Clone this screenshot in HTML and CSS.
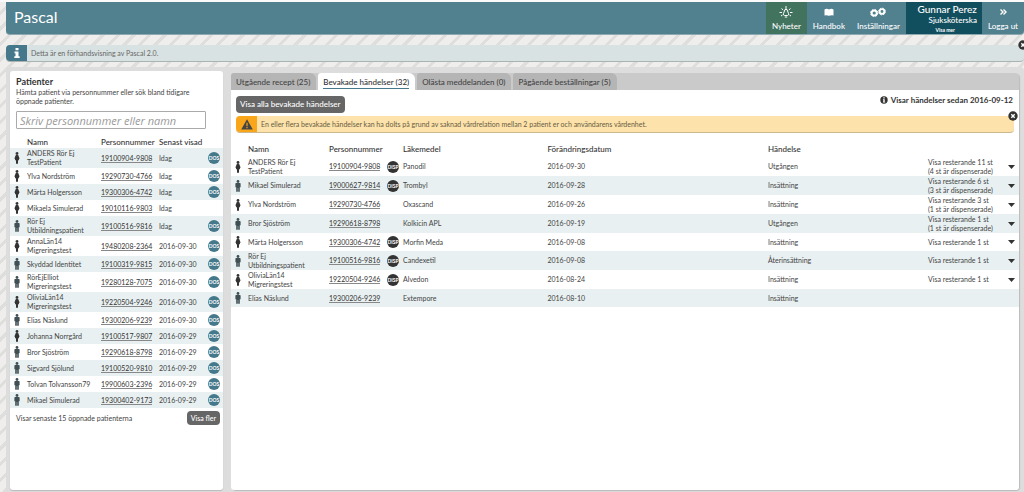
FILE: index.html
```html
<!DOCTYPE html>
<html lang="sv">
<head>
<meta charset="utf-8">
<meta name="viewport" content="width=device-width, initial-scale=1">
<title>Pascal</title>
<link rel="stylesheet" href="styles.css">
</head>
<body>
<svg class="symbols" aria-hidden="true">
  <symbol id="woman" viewBox="0 0 6 12"><circle cx="3" cy="1.5" r="1.4"/><path d="M1.800 3h2.400l1.400 3.500-.7.500L5 8.200H4v3.500H2V8.200H1L1.100 7l-.7-.5z"/></symbol>
  <symbol id="man" viewBox="0 0 6 12"><circle cx="3" cy="1.500" r="1.400"/><path d="M1 3h4l.6.6v3.600H4.800v4.500H3.200V8h-.4v3.700H1.200V7.200H.4V3.600z"/></symbol>
  <symbol id="close" viewBox="0 0 10 10"><circle cx="5" cy="5" r="4.700" fill="#333"/><path d="M3.300 3.300l3.400 3.400M6.700 3.300L3.300 6.700" stroke="#fff" stroke-width="1.400"/></symbol>
</svg>
<div class="page">
  <header class="topbar">
    <h1 class="brand">Pascal</h1>
    <nav class="menu">
      <a class="menu-item news" href="#"><svg class="menu-icon" viewBox="0 0 16 14" fill="none" stroke="#fff"><path d="M7 4.500L5.500 8.500Q5 10.200 6.500 10.500h3q1.500-.3 1-2L9 4.500z"/><path d="M6.800 12h2.400M8 1v3M3.500 3.500l1.700 1.500M12.500 3.500l-1.700 1.500M1.500 7.500h2.500M12 7.500h2.500M3 11l1.500-1M13 11l-1.500-1"/></svg>Nyheter</a>
      <a class="menu-item" href="#"><svg class="menu-icon" viewBox="0 0 16 14" fill="#fff"><path d="M3.500 4.500q2.300-1.300 4.500 0 2.300-1.300 4.500 0v6q-2.200-.4-4.500.3-2.200-.7-4.500-.3z"/></svg>Handbok</a>
      <a class="menu-item" href="#"><svg class="menu-icon" viewBox="0 0 16 14" fill="none" stroke="#fff"><circle cx="4.200" cy="8" r="2.600" stroke-width="2"/><circle cx="4.200" cy="8" r="3.600" stroke-dasharray="1.500 1.330"/><circle cx="12" cy="6.500" r="2.400" stroke-width="1.900"/><circle cx="12" cy="6.500" r="3.400" stroke-dasharray="1.400 1.270"/></svg>Inställningar</a>
      <a class="account" href="#"><span class="account-name">Gunnar Perez</span><span class="account-role">Sjuksköterska</span><span class="account-more">Visa mer</span></a>
      <a class="menu-item logout" href="#"><svg class="menu-icon" viewBox="0 0 16 14" fill="none" stroke="#fff" stroke-width="1.400"><path d="M5.500 4.500L8 7 5.500 9.500M8.500 4.500L11 7 8.500 9.500"/></svg>Logga ut</a>
    </nav>
  </header>

  <div class="notice info">
    <span class="notice-icon"><svg viewBox="0 0 8 10" width="8" height="10" fill="#fff"><path d="M2.500 0h3v2.200h-3zM1.500 3.500h4v4.700h1.200V10H1.300V8.200h1.200v-3h-1z"/></svg></span>
    <p class="notice-text">Detta är en förhandsvisning av Pascal 2.0.</p>
    <button class="dismiss" type="button" aria-label="Stäng"><svg width="10" height="10"><use href="#close"/></svg></button>
  </div>

  <main class="workspace">
    <section class="patients">
      <div class="patients-head">
        <h2 class="title">Patienter</h2>
        <label class="hint" for="search">Hämta patient via personnummer eller sök bland tidigare öppnade patienter.</label>
        <input class="search" id="search" type="text" placeholder="Skriv personnummer eller namn">
      </div>
      <table class="list patient-list">
        <colgroup><col class="p-icon"><col class="p-name"><col class="p-id"><col class="p-seen"><col class="p-tag"></colgroup>
        <thead><tr><th></th><th>Namn</th><th>Personnummer</th><th>Senast visad</th><th></th></tr></thead>
        <tbody id="patients"></tbody>
      </table>
      <div class="patients-foot"><span>Visar senaste 15 öppnade patienterna</span><button class="button small" type="button">Visa fler</button></div>
    </section>

    <section class="events">
      <nav class="tabs">
        <a class="tab" href="#"><span>Utgående recept (25)</span></a>
        <a class="tab active" href="#" aria-current="page"><span>Bevakade händelser (32)</span></a>
        <a class="tab" href="#"><span>Olästa meddelanden (0)</span></a>
        <a class="tab" href="#"><span>Pågående beställningar (5)</span></a>
      </nav>
      <div class="events-body">
        <div class="toolbar">
          <button class="button" type="button">Visa alla bevakade händelser</button>
          <span class="since"><svg width="8" height="8" viewBox="0 0 8 8"><circle cx="4" cy="4" r="3.700" fill="#333"/><path d="M3.300 1.300h1.400v1.200H3.300zM2.900 3.200h1.800v2.600h.5v.8H2.900v-.8h.4V4h-.4z" fill="#fff"/></svg>Visar händelser sedan 2016-09-12</span>
        </div>
        <div class="notice warning">
          <span class="notice-icon"><svg viewBox="0 0 12 11" width="12" height="11"><path d="M6 .3L11.800 10.500H.2z" fill="#444"/><path d="M5.400 3.800h1.200v3.500H5.400zM5.400 8h1.200v1.300H5.400z" fill="#f9a61a"/></svg></span>
          <p class="notice-text">En eller flera bevakade händelser kan ha dolts på grund av saknad vårdrelation mellan 2 patient er och användarens vårdenhet.</p>
          <button class="dismiss" type="button" aria-label="Stäng"><svg width="10" height="10"><use href="#close"/></svg></button>
        </div>
        <table class="list event-list">
          <colgroup><col class="e-icon"><col class="e-name"><col class="e-id"><col class="e-tag"><col class="e-drug"><col class="e-date"><col class="e-type"><col class="e-rest"><col class="e-open"></colgroup>
          <thead><tr><th></th><th>Namn</th><th>Personnummer</th><th></th><th>Läkemedel</th><th>Förändringsdatum</th><th>Händelse</th><th></th><th></th></tr></thead>
          <tbody id="events"></tbody>
        </table>
      </div>
    </section>
  </main>
</div>
<script src="app.js"></script>
</body>
</html>
```

FILE: styles.css
```css
* { box-sizing: border-box; }
body {
  margin: 0;
  font: 7px/9px Lato, "Liberation Sans", sans-serif;
  color: #444;
  background: repeating-linear-gradient(135deg, #efeeec 0 8px, #dededd 8px 11px);
}
h1, h2, p { margin: 0; }
a { color: inherit; text-decoration: none; }
button { font: inherit; border: 0; padding: 0; cursor: pointer; }
.symbols { display: none; }
.page { display: flex; flex-direction: column; min-height: 100vh; padding-left: 6px; border-top: 2px solid #fafafa; overflow-x: hidden; }

.topbar { display: flex; justify-content: space-between; height: 33px; background: #51808f; color: #fff; border-radius: 0 0 4px 4px; border-bottom: 1px solid #8fa9b0; overflow: hidden; }
.brand { font-size: 16px; line-height: 29px; font-weight: 400; padding-left: 8px; }
.menu { display: flex; }
.menu-item { display: flex; flex-direction: column; align-items: center; padding: 3px 6px 0; font-size: 8px; line-height: 10px; font-weight: 500; }
.menu-item.news { background: #41735f; }
.menu-icon { width: 16px; height: 14px; margin-bottom: 2px; }
.account { display: flex; flex-direction: column; align-items: flex-end; width: 76px; padding: 2px 5px 0 0; background: #124f5e; font-weight: 500; }
.account-name { font-size: 10px; line-height: 11px; }
.account-role { font-size: 8px; line-height: 11px; }
.account-more { font-size: 5px; line-height: 8px; padding-right: 22px; font-weight: 700; }

.notice { position: relative; display: flex; height: 17px; }
.notice-icon { display: flex; flex: none; align-items: center; justify-content: center; width: 21px; border-radius: 4px 0 0 4px; }
.notice-text { line-height: 16px; padding-left: 4px; }
.info { margin-top: 10px; background: #d9e2e2; border-bottom: 1px solid #aab3b3; border-radius: 4px; color: #666; }
.info .notice-icon { background: #44788a; }
.dismiss { position: absolute; top: -5px; right: -4px; width: 10px; height: 10px; background: none; }
.dismiss svg { display: block; }

.workspace { display: flex; flex: 1; gap: 8px; margin-top: 5px; padding: 4px 5px 2px 4px; background: #ddd; border-radius: 4px 4px 0 0; }
.patients { flex: 0 0 213px; background: #fff; border-radius: 3px; box-shadow: 0 1px 1px #bbb; }
.patients-head { padding: 5px 17px 0 6px; }
.title { font-size: 9px; line-height: 11px; color: #333; }
.hint { display: block; margin-top: 1px; }
.search { display: block; width: 100%; height: 18px; margin-top: 5px; padding: 0 3px; border: 1px solid #aaa; border-radius: 1px; background: #fff; font: italic 11px/16px "Open Sans", sans-serif; color: #444; }
.search::placeholder { color: #999; opacity: 1; }

.list { width: 100%; table-layout: fixed; border-collapse: collapse; }
.list th, .list td { padding: 0; text-align: left; vertical-align: middle; }
.list th { color: #333; font-size: 8px; font-weight: 500; white-space: nowrap; }
.list a { color: #333; border-bottom: 1px solid #888; }
.person { display: block; width: 6px; height: 12px; fill: #333; }
.person.man { fill: #3f4f54; }
.tag { display: flex; align-items: center; justify-content: center; width: 12px; height: 12px; border-radius: 50%; background: #44788a; color: #fff; font-size: 5px; line-height: 12px; font-weight: 700; }
.tag.disp { background: #333; }

.patient-list { margin-top: 8px; }
.patient-list th { height: 11px; }
.patient-list td { height: 16px; }
.patient-list .double td { height: 20px; }
.patient-list tbody tr:nth-child(odd), .event-list tbody tr:nth-child(even) { background: #e8f0f1; }
.list td:first-child { padding-left: 4px; }
.p-icon { width: 17px; }
.p-name { width: 74px; }
.p-id { width: 58px; }
.p-seen { width: 49px; }
.patients-foot { display: flex; align-items: center; justify-content: space-between; padding: 3px 3px 0 6px; }

.button { height: 17px; padding: 0 4px; border-radius: 4px; background: #666; color: #fff; font-size: 8px; font-weight: 500; line-height: 17px; }
.button.small { height: 14px; font-size: 7px; line-height: 14px; }

.events { display: flex; flex: 1; flex-direction: column; min-width: 0; margin-top: 2px; border-radius: 4px; background: #cacaca; box-shadow: 1px 1px 1px #bbb; }
.tabs { display: flex; height: 17px; }
.tab { padding: 3px 6px 0 5px; margin-right: 2px; border-radius: 3px 6px 0 0; background: #b5b5b5; font-size: 8px; font-weight: 500; line-height: 12px; }
.tab span { display: block; }
.tab.active { background: #fff; color: #333; }
.tab.active span { border-bottom: 1px solid #44788a; }
.events-body { flex: 1; background: #fff; border-radius: 0 0 3px 3px; }
.toolbar { display: flex; justify-content: space-between; padding: 6px 6px 0 5px; }
.since { display: flex; gap: 3px; font-size: 8px; line-height: 9px; font-weight: 700; color: #333; }
.warning { margin: 3px 5px 0; background: #fde2ab; border-bottom: 1px solid #cbb88f; border-radius: 4px; color: #665c42; }
.warning .notice-icon { background: #f9a61a; }

.event-list { margin-top: 12px; }
.event-list th { height: 12px; vertical-align: top; }
.event-list td { height: 18px; }
.event-list .double td { height: 19px; }
.e-icon { width: 17px; }
.e-name { width: 81px; }
.e-id { width: 58px; }
.e-tag { width: 16px; }
.e-drug { width: auto; }
.e-date { width: 28%; }
.e-type { width: 160px; }
.e-rest { width: 80px; }
.e-open { width: 11px; }
.expand { display: block; width: 7px; height: 12px; background: none; }
.expand svg { display: block; }
```

FILE: app.js
```js
const patients = [
  ['woman', 'ANDERS Rör Ej<br>TestPatient', '19100904-9808', 'Idag', true],
  ['woman', 'Ylva Nordström', '19290730-4766', 'Idag', true],
  ['woman', 'Märta Holgersson', '19300306-4742', 'Idag', true],
  ['woman', 'Mikaela Simulerad', '19010116-9803', 'Idag', false],
  ['man', 'Rör Ej<br>Utbildningspatient', '19100516-9816', 'Idag', true],
  ['woman', 'AnnaLän14<br>Migreringstest', '19480208-2364', '2016-09-30', true],
  ['man', 'Skyddad Identitet', '19100319-9815', '2016-09-30', true],
  ['man', 'RörEjElliot<br>Migreringstest', '19280128-7075', '2016-09-30', true],
  ['woman', 'OliviaLän14<br>Migreringstest', '19220504-9246', '2016-09-30', true],
  ['man', 'Elias Näslund', '19300206-9239', '2016-09-30', true],
  ['woman', 'Johanna Norrgård', '19100517-9807', '2016-09-29', true],
  ['man', 'Bror Sjöström', '19290618-8798', '2016-09-29', true],
  ['man', 'Sigvard Sjölund', '19100520-9810', '2016-09-29', true],
  ['man', 'Tolvan Tolvansson79', '19900603-2396', '2016-09-29', true],
  ['man', 'Mikael Simulerad', '19300402-9173', '2016-09-29', true]
];
const events = [
  ['woman', 'ANDERS Rör Ej<br>TestPatient', '19100904-9808', true, 'Panodil', '2016-09-30', 'Utgången', 'Visa resterande 11 st<br>(4 st är dispenserade)'],
  ['man', 'Mikael Simulerad', '19000627-9814', true, 'Trombyl', '2016-09-28', 'Insättning', 'Visa resterande 6 st<br>(3 st är dispenserade)'],
  ['woman', 'Ylva Nordström', '19290730-4766', false, 'Oxascand', '2016-09-26', 'Insättning', 'Visa resterande 3 st<br>(1 st är dispenserade)'],
  ['man', 'Bror Sjöström', '19290618-8798', false, 'Kolkicin APL', '2016-09-19', 'Utgången', 'Visa resterande 1 st<br>(1 st är dispenserade)'],
  ['woman', 'Märta Holgersson', '19300306-4742', true, 'Morfin Meda', '2016-09-08', 'Insättning', 'Visa resterande 1 st'],
  ['man', 'Rör Ej<br>Utbildningspatient', '19100516-9816', true, 'Candexetil', '2016-09-08', 'Återinsättning', 'Visa resterande 1 st'],
  ['woman', 'OliviaLän14<br>Migreringstest', '19220504-9246', true, 'Alvedon', '2016-08-24', 'Insättning', 'Visa resterande 1 st'],
  ['man', 'Elias Näslund', '19300206-9239', false, 'Extempore', '2016-08-10', 'Insättning', '']
];
const person = kind => `<svg class="person ${kind}"><use href="#${kind}"/></svg>`;
const row = cells => {
  const html = cells.map(cell => `<td>${cell}</td>`).join('');
  return `<tr class="${html.includes('<br>') ? 'double' : 'single'}">${html}</tr>`;
};
document.getElementById('patients').innerHTML = patients.map(([kind, name, id, seen, dos]) =>
  row([person(kind), name, `<a href="#">${id}</a>`, seen, dos ? '<span class="tag">DOS</span>' : ''])).join('');
document.getElementById('events').innerHTML = events.map(([kind, name, id, disp, drug, date, type, rest]) =>
  row([person(kind), name, `<a href="#">${id}</a>`, disp ? '<span class="tag disp">DISP</span>' : '', drug, date, type, rest,
    rest ? '<button class="expand" type="button" aria-label="Visa"><svg width="7" height="12" viewBox="0 0 7 12"><path d="M0 4h7L3.500 8z" fill="#333"/></svg></button>' : ''])).join('');
```
